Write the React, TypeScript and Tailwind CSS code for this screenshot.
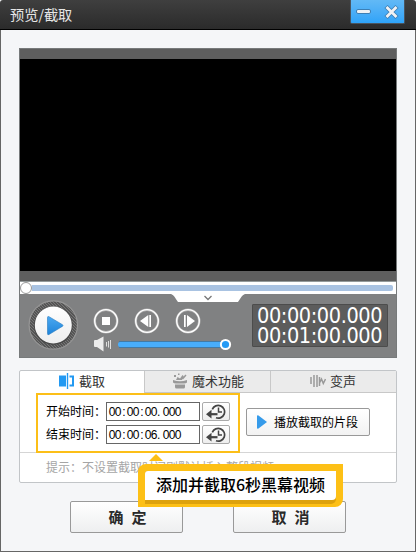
import React from "react";

const cjk = "font-['Noto_Sans_CJK_SC',sans-serif]";

function Header() {
  return (
    <header className="flex h-[30px] shrink-0 items-start justify-between border-b border-black bg-gradient-to-b from-[#3f3f3f] to-[#2b2b2b] pr-[11px] pl-[10px]">
      <h1 className="mt-[4px] text-[14.2px] leading-5 font-normal text-[#e6e6e6]">预览/截取</h1>
      <div className="h-6 w-[55px] rounded-b-[2px] border border-t-0 border-[#4a5560] bg-gradient-to-b from-[#62b9f6] to-[#2ea3f8]">
        <svg width="53" height="23" viewBox="0 0 53 23" fill="none">
          <rect x="5.500" y="9.500" width="14" height="4" rx="1.500" fill="#eef1f4" stroke="#3c7fb5" />
          <path d="M35 6.500l11 11M46 6.500L35 17.500" stroke="#3c7fb5" strokeWidth="4.500" />
          <path d="M35.500 7l10 10M45.500 7L35.500 17" stroke="#f1f2f4" strokeWidth="2.800" />
        </svg>
      </div>
    </header>
  );
}

function PlayerControls() {
  return (
    <svg width="240" height="63" viewBox="20 294 240 63" fill="none" className="shrink-0">
      <defs>
        <pattern id="knurl" width="3" height="3" patternUnits="userSpaceOnUse">
          <rect width="3" height="3" fill="#555" />
          <path d="M0 0l3 3" stroke="#777" />
        </pattern>
        <linearGradient id="white" x2="0" y2="1">
          <stop stopColor="#fff" />
          <stop offset="1" stopColor="#eee" />
        </linearGradient>
        <linearGradient id="blue" x2="0" y2="1">
          <stop stopColor="#4ba9f1" />
          <stop offset="1" stopColor="#1e83d9" />
        </linearGradient>
      </defs>
      <path d="M170 294h76c-3 0-4 2-8 8h-60c-4-6-5-8-8-8z" fill="#fff" />
      <path d="M204.500 296l3.500 3.500 3.500-3.500" stroke="#777" strokeWidth="1.300" />
      <circle cx="53.300" cy="325" r="24.200" fill="url(#knurl)" stroke="#969696" strokeWidth="1.200" />
      <circle cx="53.300" cy="325.500" r="19.300" fill="#484848" />
      <circle cx="53.300" cy="325" r="18.500" fill="url(#white)" />
      <path d="M47.500 317.500q0-1.500 1.500-.8l13.500 8q1 .8 0 1.600L49 334.500q-1.500.8-1.500-.8z" fill="url(#blue)" stroke="#257ac0" strokeWidth=".6" />
      <g stroke="#b4b4b4" strokeWidth="2.400">
        <circle cx="106" cy="321" r="11.300" />
        <circle cx="147" cy="321" r="11.300" />
        <circle cx="188" cy="321" r="11.300" />
      </g>
      <g stroke="#fff" strokeWidth="1.300">
        <circle cx="106" cy="321" r="11.300" />
        <circle cx="147" cy="321" r="11.300" />
        <circle cx="188" cy="321" r="11.300" />
      </g>
      <g fill="#fff">
        <rect x="102" y="317" width="8" height="8" />
        <path d="M140 321l8.300-6v12zM149.300 315h1.700v12h-1.700zM184 315h1.700v12H184zM187 315l8 6-8 6z" />
      </g>
      <path d="M94 341q0-1 1-1h2l6.500-3.500v15L97 347h-2q-1 0-1-1z" fill="#ececec" />
      <path d="M106.500 342v4.500M108.500 341v6.500M110.500 340v9" stroke="#dedede" />
      <rect x="118" y="342" width="108" height="5" rx="2" fill="#49adfa" />
      <path d="M119 341.500h102M119 347.500h102" stroke="#3579ad" strokeWidth=".8" />
      <circle cx="225.500" cy="344.500" r="4.600" fill="#269bf5" stroke="#fff" strokeWidth="2" />
    </svg>
  );
}

function Player() {
  return (
    <section className="mx-[18px] mt-[18px] flex h-[310px] flex-col border border-[#777a7b] bg-[#808182]">
      <div className="h-[10px] shrink-0 bg-[#5e5e5e]" />
      <div className="h-[212px] shrink-0 bg-black" />
      <div className="h-[10px] shrink-0 bg-[#5e5e5e]" />
      <div className="flex h-[13px] shrink-0 items-center border-t border-[#949a9a] bg-white">
        <div className="h-[12px] w-[12px] rounded-full border border-[#999] bg-white" />
        <div className="mr-[3px] h-[6px] flex-1 rounded-r-[2px] bg-[#a9c3e2]" />
      </div>
      <div className="flex">
        <PlayerControls />
        <div className="mt-[10px] -ml-[8px] flex h-[43px] w-[136px] shrink-0 flex-col rounded-[1px] border border-[#4c4c4c] bg-[#5c5c5c] pt-px pl-[4px] font-['DejaVu_Sans_Condensed','DejaVu_Sans',sans-serif] text-[21.5px] leading-[20px] tracking-[-0.4px] text-white [font-stretch:condensed]">
          <span>00:00:00.000</span>
          <span>00:01:00.000</span>
        </div>
      </div>
    </section>
  );
}

function TrimIcon() {
  return (
    <svg width="16" height="16" viewBox="0 0 16 16" fill="none" className="-mt-px">
      <path d="M0 2.500h7v11H0z" fill="#2299f2" />
      <path d="M8.500 0v16" stroke="#2299f2" strokeWidth="1.400" />
      <path d="M10.500 3.500H14v9h-3.500" stroke="#2299f2" strokeWidth="2" />
    </svg>
  );
}

function MagicIcon() {
  return (
    <svg width="16" height="16" viewBox="0 0 16 16" fill="#999" className="-mt-px">
      <path d="M1 7q7 2.500 14 0v2.500q-1 1-3 1H4q-2 0-3-1zM3 11.500h10V14q0 1.500-1.500 1.500h-7Q3 15.500 3 14zM4 7l1.500-3L8 5.500 10.500 2l1 1L10 7zM2 2h2v2H2zM6 0.500h1.500V2H6zM10 5l3.500-3.500 1 1L11 6.500z" />
    </svg>
  );
}

function VoiceIcon() {
  return (
    <svg width="16" height="14" viewBox="0 0 16 14" fill="none" stroke="#999" strokeWidth="1.500" className="-mt-px">
      <path d="M1 3v7M4 1v12M7 1v12M9.500 3v9M9.800 8.500L11.500 5l1.800 4.500L15.500 5" />
    </svg>
  );
}

function TimeField({ label, value }: { label: string; value: string }) {
  return (
    <div className="flex h-[19px] items-center">
      <span className="-mt-[2px] w-[60px] text-[12px] leading-[18px] whitespace-nowrap text-black">{label}</span>
      <div className="flex h-[19px] w-[94px] items-center border border-[#666] bg-white pl-[2px] font-['Liberation_Sans',sans-serif] text-[12px] leading-none text-black">
        {value.split("").map((c, i) => (
          <span key={i} className={c === "." ? "w-[6px]" : "flex w-[6px] justify-center"}>{c}</span>
        ))}
      </div>
      <button className="ml-[2px] flex h-[19px] w-[28px] items-center justify-center rounded-[2px] border border-[#aaa] bg-gradient-to-b from-white to-[#eee]">
        <svg width="20" height="16" viewBox="0 0 20 16" fill="none" stroke="#444">
          <path d="M6.300 5.300A6.400 6.400 0 1 1 10 13.800" strokeWidth="1.700" />
          <path d="M12.500 3.500v4.500H16" strokeWidth="1.500" />
          <path d="M4 10.200h7.500" strokeWidth="2.200" />
          <path d="M0 10.200L5.500 5.800v8.800z" fill="#444" stroke="none" />
        </svg>
      </button>
    </div>
  );
}

function Tabs() {
  return (
    <section className="mx-[18px] mt-3 flex h-[113px] flex-col rounded-[2px] border border-[#c2c5c8] bg-white">
      <div className="flex h-[22px] shrink-0 text-[13px] leading-[20px] text-[#333]">
        <div className="flex w-[124px] items-center gap-[4px] pb-[2px] pl-[39px]"><TrimIcon />截取</div>
        <div className="flex w-[126px] items-center gap-[4px] border-b border-l border-[#c8c8c8] bg-[#ebebeb] pb-px pl-[27px]"><MagicIcon />魔术功能</div>
        <div className="flex flex-1 items-center gap-[4px] border-b border-l border-[#c8c8c8] bg-[#ebebeb] pb-px pl-[39px]"><VoiceIcon />变声</div>
      </div>
      <div className="flex h-[60px] shrink-0 items-start border-b border-[#d5d5d5] pl-4">
        <div className="flex h-[60px] w-[204px] shrink-0 flex-col gap-[4px] border-2 border-[#fcbf18] pt-[7px] pl-2">
          <TimeField label="开始时间：" value="00:00:00.000" />
          <TimeField label="结束时间：" value="00:00:06.000" />
        </div>
        <button className="mt-[15px] ml-[6px] flex h-[28px] w-[124px] items-center gap-[7px] rounded-[2px] border border-[#999] bg-gradient-to-b from-white to-[#f2f2f2] pl-[10px] text-[12px] whitespace-nowrap text-black">
          <svg width="10" height="14" viewBox="0 0 10 14"><path d="M0 1q0-1 1.500-.5L10 7l-8.500 6.500Q0 14 0 13z" fill="#369bea" /></svg>
          播放截取的片段
        </button>
      </div>
      <p className="pt-[5px] pl-[26px] text-[12px] leading-[18px] whitespace-nowrap text-[#a5a5a5]">提示：不设置截取时间则默认插入整段视频</p>
    </section>
  );
}

function Tooltip() {
  return (
    <div className="absolute top-[454px] left-[138px]">
      <svg width="14" height="7" viewBox="0 0 14 7" className="ml-[11px] block"><path d="M7 0l7 7H0z" fill="#fdbf16" /></svg>
      <div className="mt-[3px] h-[43px] w-[205px] rounded-tl-[8px] rounded-br-[8px] bg-[#fdc016] px-[7px] pt-[7px]">
        <div className="h-[33px] rounded-tl-[3px] rounded-br-[5px] bg-[#dda20d] pb-[4px]">
          <div className="h-[29px] rounded-tl-[3px] rounded-br-[4px] bg-white pl-[11px] text-[16px] leading-[27px] font-medium whitespace-nowrap text-black">添加并截取6秒黑幕视频</div>
        </div>
      </div>
    </div>
  );
}

function DialogButton({ children }: { children: React.ReactNode }) {
  return (
    <button className="flex h-8 w-[113px] items-center justify-center gap-[8px] rounded-[2px] border border-[#999] bg-gradient-to-b from-white to-[#eeeff0] pl-[2px] text-[15px] font-bold text-[#2a2a2a]">
      {children}
    </button>
  );
}

export default function App() {
  return (
    <div className={`relative h-[552px] w-[416px] overflow-hidden bg-white ${cjk}`}>
      <div className="flex h-[552px] flex-col overflow-hidden rounded-t-[3px] bg-[#f5f6f8]">
        <Header />
        <main className="flex-1 border border-t-0 border-[#666]">
          <Player />
          <Tabs />
          <div className="mt-[18px] ml-[69px] flex gap-[50px]">
            <DialogButton><span>确</span><span>定</span></DialogButton>
            <DialogButton><span>取</span><span>消</span></DialogButton>
          </div>
        </main>
      </div>
      <Tooltip />
    </div>
  );
}
